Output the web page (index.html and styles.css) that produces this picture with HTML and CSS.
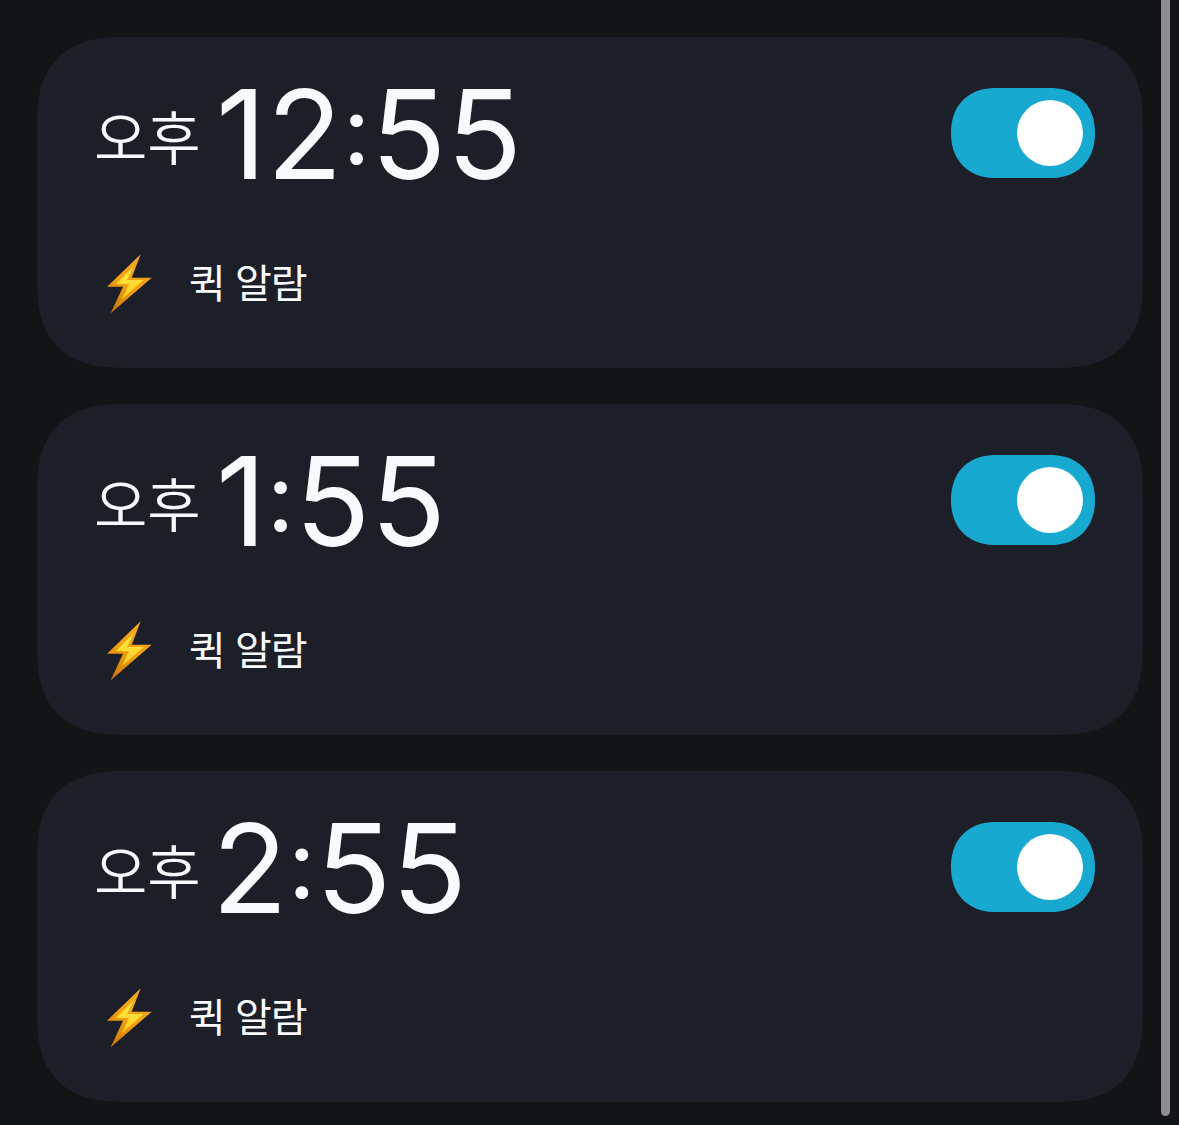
FILE: index.html
```html
<!DOCTYPE html>
<html lang="ko">
<head>
    <meta charset="UTF-8">
    <meta name="viewport" content="width=device-width, initial-scale=1.0">
    <title>알람</title>
    <link rel="stylesheet" href="styles.css">
</head>
<body>
    <svg class="defs" width="0" height="0">
        <defs>
            <linearGradient id="boltOuter" x1="0.75" y1="0" x2="0.2" y2="1">
                <stop offset="0" stop-color="#f2a52a"/>
                <stop offset="0.5" stop-color="#f4a10f"/>
                <stop offset="1" stop-color="#c9780c"/>
            </linearGradient>
            <linearGradient id="boltInner" x1="0.5" y1="0" x2="0.5" y2="1">
                <stop offset="0" stop-color="#ffea4a"/>
                <stop offset="1" stop-color="#ffcf1c"/>
            </linearGradient>
            <symbol id="bolt" viewBox="0 0 46 60">
                <path d="M34.7 0.3 L1 32.7 L17 32.7 L4.7 59.3 L45.7 23.7 L25.7 23.7 Z" fill="url(#boltOuter)"/>
                <path d="M28 12 L10 30 L23 30 L16 45 L37.5 26 L21 26 Z" fill="url(#boltInner)"/>
            </symbol>
        </defs>
    </svg>

    <main class="list">
        <section class="card">
            <div class="top">
                <div class="time"><span class="ampm">오후</span><span class="clock">12<span class="colon">:</span>55</span></div>
                <div class="switch"><div class="knob"></div></div>
            </div>
            <div class="label">
                <svg class="bolt"><use href="#bolt"/></svg>
                <span class="label-text">퀵 알람</span>
            </div>
        </section>
        <section class="card">
            <div class="top">
                <div class="time"><span class="ampm">오후</span><span class="clock">1<span class="colon">:</span>55</span></div>
                <div class="switch"><div class="knob"></div></div>
            </div>
            <div class="label">
                <svg class="bolt"><use href="#bolt"/></svg>
                <span class="label-text">퀵 알람</span>
            </div>
        </section>
        <section class="card">
            <div class="top">
                <div class="time"><span class="ampm">오후</span><span class="clock clock-two">2<span class="colon">:</span>55</span></div>
                <div class="switch"><div class="knob"></div></div>
            </div>
            <div class="label">
                <svg class="bolt"><use href="#bolt"/></svg>
                <span class="label-text">퀵 알람</span>
            </div>
        </section>
    </main>

    <div class="scrollbar"></div>
</body>
</html>
```

FILE: styles.css
```css
*{
    margin: 0;
    padding: 0;
    box-sizing: border-box;
}
html,body{
    height: 100%;
    overflow: hidden;
}
body{
    background-color: #131416;
    color: #f8fafd;
    font-family: Inter, "Noto Sans CJK KR", sans-serif;
    position: relative;
}
.defs{
    position: absolute;
}
.list{
    display: flex;
    flex-direction: column;
    gap: 36px;
    padding: 37px 36px 0 37px;
}
.card{
    height: 331px;
    background-color: #1c1f27;
    border-radius: 88px;
    corner-shape: superellipse(1.35);
    padding: 51px 48px 0 60px;
}
.top{
    display: flex;
    justify-content: space-between;
    align-items: flex-start;
    height: 90px;
}
.time{
    display: flex;
    align-items: center;
    height: 90px;
}
.ampm{
    font-family: "Noto Sans CJK KR", sans-serif;
    font-size: 58px;
    font-weight: 350;
    line-height: 90px;
    width: 120px;
    margin-left: -3px;
    margin-top: 4px;
}
.clock{
    font-size: 124px;
    font-weight: 400;
    line-height: 90px;
    letter-spacing: 0.4px;
    margin-left: 2px;
    margin-top: 2px;
}
.clock-two{
    margin-left: -2px;
}
.colon{
    font-size: 96px;
    line-height: 0;
    vertical-align: 15px;
}
.switch{
    width: 144px;
    height: 90px;
    background-color: #17a9d0;
    border-radius: 45px;
    corner-shape: superellipse(1.15);
    display: flex;
    align-items: center;
    justify-content: flex-end;
    padding-right: 12px;
}
.knob{
    width: 66px;
    height: 66px;
    border-radius: 50%;
    background-color: #fff;
}
.label{
    display: flex;
    align-items: center;
    margin-top: 76px;
    margin-left: 9px;
}
.bolt{
    width: 46px;
    height: 60px;
}
.label-text{
    font-family: "Noto Sans CJK KR", sans-serif;
    font-size: 40px;
    font-weight: 400;
    line-height: 52px;
    letter-spacing: -1px;
    margin-left: 37px;
    margin-bottom: 6px;
}
.scrollbar{
    position: absolute;
    top: 0;
    left: 1161px;
    width: 9px;
    height: 1116px;
    background-color: #8e8e90;
    border-radius: 0 0 5px 5px;
}
```
